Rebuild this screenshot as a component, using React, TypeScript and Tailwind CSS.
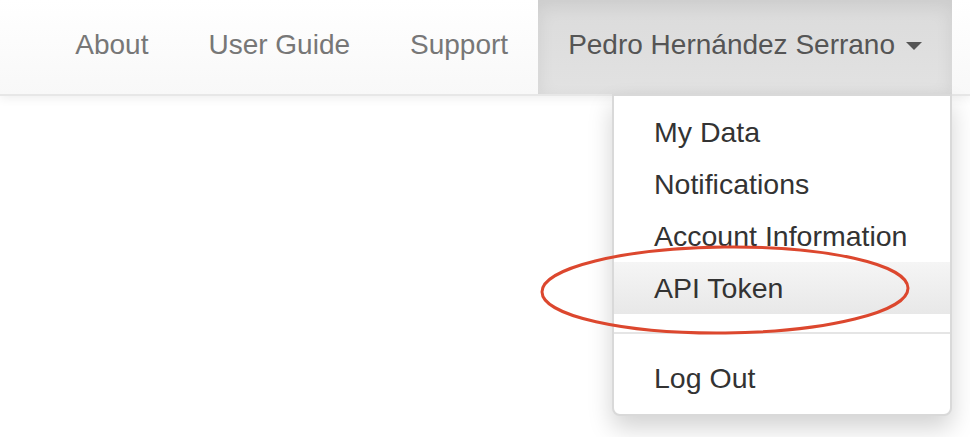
const links = ["About", "User Guide", "Support"]

const menu = [
  { label: "My Data" },
  { label: "Notifications" },
  { label: "Account Information" },
  { label: "API Token", active: true },
]

export default function App() {
  return (
    <div
      className="relative w-[970px] h-[437px] overflow-hidden bg-white"
      style={{ fontFamily: '"Liberation Sans", Arial, Helvetica, sans-serif' }}
    >
      {/* Navbar */}
      <nav className="h-[96px] bg-gradient-to-b from-white to-[#f8f8f8] border-b-2 border-[#e7e7e7] shadow-[0_2px_10px_rgba(0,0,0,0.075)]">
        <ul className="flex justify-end h-[94px] pr-[18px] text-[28px] leading-[40px]">
          {links.map((l) => (
            <li key={l} className="flex items-center px-[30px] pb-[4px] text-[#777]">
              {l}
            </li>
          ))}
          <li className="relative flex items-center pl-[30px] pr-[30px] pb-[4px] text-[#555] bg-gradient-to-b from-[#dbdbdb] to-[#e2e2e2] shadow-[inset_0_6px_18px_rgba(0,0,0,0.075)]">
            <span>Pedro Hernández Serrano</span>
            <span className="ml-[11px] mt-[1px] w-0 h-0 border-t-[8px] border-t-[#555] border-x-[8px] border-x-transparent" />

            {/* Dropdown */}
            <div className="absolute right-0 top-[94px] w-[340px] z-10 bg-white border-2 border-[rgba(0,0,0,0.15)] rounded-b-[8px] py-[10px] shadow-[0_12px_24px_rgba(0,0,0,0.175)]">
              {menu.map((m) => (
                <div
                  key={m.label}
                  className={
                    "px-[40px] py-[6px] text-[28.5px] leading-[40px] text-[#333] whitespace-nowrap " +
                    (m.active ? "bg-gradient-to-b from-[#f5f5f5] to-[#e8e8e8]" : "")
                  }
                >
                  {m.label}
                </div>
              ))}
              <div className="h-[2px] my-[18px] bg-[#e5e5e5]" />
              <div className="px-[40px] py-[6px] text-[28.5px] leading-[40px] text-[#333]">Log Out</div>
            </div>
          </li>
        </ul>
      </nav>

      {/* Annotation */}
      <svg
        className="absolute left-[538px] top-[243px] z-20 pointer-events-none"
        width="378"
        height="96"
        viewBox="0 0 378 96"
      >
        <ellipse
          cx="187"
          cy="47"
          rx="183"
          ry="43"
          fill="none"
          stroke="#dc472e"
          strokeWidth="3"
          transform="rotate(-0.6 187 47)"
        />
      </svg>
    </div>
  )
}
